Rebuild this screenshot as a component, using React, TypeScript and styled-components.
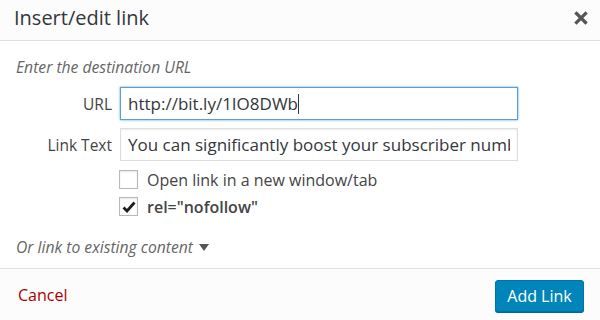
import React from "react";
import styled, { createGlobalStyle } from "styled-components";

const Global = createGlobalStyle`
  html, body { margin: 0; padding: 0; background: #fff; }
  body { font-family: "Open Sans", "Noto Sans", sans-serif; }
`;

const Dialog = styled.div`
  width: 600px;
  height: 320px;
  display: flex;
  flex-direction: column;
  background: #fff;
  overflow: hidden;
`;

const Header = styled.div`
  height: 41px;
  flex: none;
  display: flex;
  align-items: center;
  justify-content: space-between;
  padding: 0 12px 4px 14px;
  background: #fcfcfc;
  border-bottom: 1px solid #dfdfdf;
  box-sizing: border-box;
`;

const Title = styled.h1`
  margin: 0;
  font-size: 20px;
  font-weight: 400;
  color: #32373c;
  line-height: 28px;
`;

const Close = styled.button`
  border: 0;
  background: transparent;
  padding: 0;
  width: 14px;
  height: 14px;
  display: flex;
  align-items: center;
  justify-content: center;
`;

const Body = styled.div`
  flex: 1;
  padding: 15px 16px 0 16px;
  display: flex;
  flex-direction: column;
`;

const Hint = styled.p`
  margin: 0;
  font-size: 15.7px;
  font-style: italic;
  color: #666;
  line-height: 22px;
`;

const Fields = styled.div`
  display: flex;
  flex-direction: column;
  gap: 8px;
  margin-top: 9px;
`;

const Row = styled.div`
  display: flex;
  align-items: center;
  gap: 8px;
`;

const Label = styled.label`
  width: 96px;
  text-align: right;
  font-size: 15.5px;
  color: #444;
`;

const Input = styled.div<{ $focus?: boolean }>`
  width: 398px;
  height: 33px;
  box-sizing: border-box;
  border: 1px solid ${(p) => (p.$focus ? "#5b9dd9" : "#ddd")};
  box-shadow: ${(p) => (p.$focus ? "0 0 2px rgba(30,140,190,.8)" : "inset 0 1px 2px rgba(0,0,0,.07)")};
  padding: 0 7px;
  font-size: 17px;
  line-height: 31px;
  color: #32373c;
  display: flex;
  align-items: center;
`;

const Value = styled.span`
  flex: 1;
  min-width: 0;
  white-space: nowrap;
  overflow: hidden;
  display: flex;
  align-items: center;
`;

const Caret = styled.span`
  display: inline-block;
  width: 1px;
  height: 20px;
  background: #32373c;
`;

const Checks = styled.div`
  display: flex;
  flex-direction: column;
  gap: 8px;
  margin-top: 9px;
  padding-left: 103px;
`;

const CheckRow = styled.div`
  height: 19px;
  display: flex;
  align-items: center;
  gap: 9px;
`;

const Box = styled.span`
  width: 19px;
  height: 19px;
  box-sizing: border-box;
  border: 1px solid #b4b9be;
  background: #fff;
  box-shadow: inset 0 1px 2px rgba(0,0,0,.1);
  display: flex;
  align-items: center;
  justify-content: center;
`;

const CheckText = styled.span<{ $bold?: boolean }>`
  font-size: 16px;
  color: #444;
  font-weight: ${(p) => (p.$bold ? 600 : 400)};
`;

const Toggle = styled.div`
  margin-top: 20px;
  display: flex;
  align-items: center;
  gap: 6px;
  font-size: 15.7px;
  font-style: italic;
  color: #666;
`;

const Footer = styled.div`
  height: 52px;
  flex: none;
  box-sizing: border-box;
  border-top: 1px solid #dfdfdf;
  background: #fcfcfc;
  display: flex;
  align-items: center;
  justify-content: space-between;
  padding: 0 16px 0 18px;
`;

const Cancel = styled.a`
  color: #a00;
  font-size: 16px;
  text-decoration: none;
`;

const Primary = styled.button`
  height: 32px;
  width: 89px;
  margin-top: 2px;
  border-radius: 3px;
  border: 1px solid #0073aa;
  background: #0085ba;
  box-shadow: 0 1px 0 #006799;
  color: #fff;
  font-family: inherit;
  font-size: 16px;
  padding: 0;
`;

export default function App() {
  return (
    <>
      <Global />
      <Dialog>
        <Header>
          <Title>Insert/edit link</Title>
          <Close aria-label="Close">
            <svg width="14" height="14" viewBox="0 0 14 14">
              <path d="M2.5 2.5 L11.5 11.5 M11.5 2.5 L2.5 11.5" stroke="#555" strokeWidth="3.2" strokeLinecap="square" />
            </svg>
          </Close>
        </Header>
        <Body>
          <Hint>Enter the destination URL</Hint>
          <Fields>
            <Row>
              <Label>URL</Label>
              <Input $focus>
                <Value>
                  http://bit.ly/1IO8DWb<Caret />
                </Value>
              </Input>
            </Row>
            <Row>
              <Label>Link Text</Label>
              <Input>
                <Value>You can significantly boost your subscriber numbers</Value>
              </Input>
            </Row>
          </Fields>
          <Checks>
            <CheckRow>
              <Box />
              <CheckText>Open link in a new window/tab</CheckText>
            </CheckRow>
            <CheckRow>
              <Box>
                <svg width="14" height="12" viewBox="0 0 14 12">
                  <path d="M1.5 6.5 L5 10 L12.5 1.5" fill="none" stroke="#1e1e1e" strokeWidth="2.8" />
                </svg>
              </Box>
              <CheckText $bold>rel="nofollow"</CheckText>
            </CheckRow>
          </Checks>
          <Toggle>
            Or link to existing content
            <svg width="10" height="7" viewBox="0 0 10 7">
              <path d="M0 0 L10 0 L5 7 Z" fill="#555" />
            </svg>
          </Toggle>
        </Body>
        <Footer>
          <Cancel href="#">Cancel</Cancel>
          <Primary>Add Link</Primary>
        </Footer>
      </Dialog>
    </>
  );
}
